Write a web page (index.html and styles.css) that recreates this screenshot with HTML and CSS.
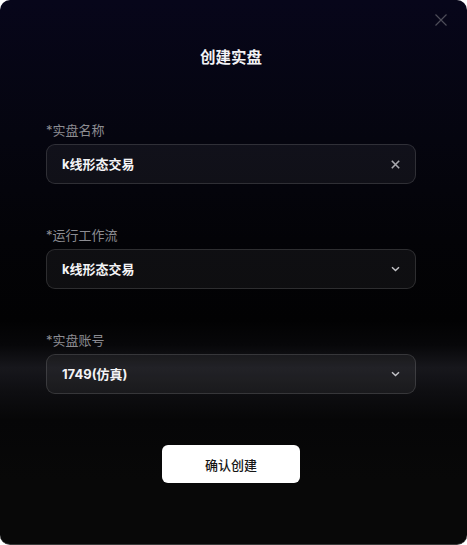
FILE: index.html
```html
<!DOCTYPE html>
<html lang="zh-CN">
<head>
<meta charset="utf-8">
<title>创建实盘</title>
<link rel="stylesheet" href="styles.css">
</head>
<body>
<div class="dialog">
  <button class="close" aria-label="关闭">
    <svg width="12" height="12" viewBox="0 0 12 12"><path d="M0.5 0.5L11.5 11.5M11.5 0.5L0.5 11.5" stroke="#4d4d58" stroke-width="1.2" fill="none"/></svg>
  </button>
  <h1 class="title">创建实盘</h1>
  <form class="form">
    <div class="field">
      <label class="label">*实盘名称</label>
      <div class="control">
        <span class="value">k线形态交易</span>
        <svg class="icon" width="9" height="9" viewBox="0 0 9 9"><path d="M0.8 0.8L8.2 8.2M8.2 0.8L0.8 8.2" stroke="#a8a8ae" stroke-width="1.6" fill="none"/></svg>
      </div>
    </div>
    <div class="field">
      <label class="label">*运行工作流</label>
      <div class="control">
        <span class="value">k线形态交易</span>
        <svg class="icon" width="9" height="6" viewBox="0 0 9 6"><path d="M1 1.2L4.5 4.6L8 1.2" stroke="#c4c4c8" stroke-width="1.4" fill="none"/></svg>
      </div>
    </div>
    <div class="field">
      <label class="label">*实盘账号</label>
      <div class="control">
        <span class="value">1749(仿真)</span>
        <svg class="icon" width="9" height="6" viewBox="0 0 9 6"><path d="M1 1.2L4.5 4.6L8 1.2" stroke="#c4c4c8" stroke-width="1.4" fill="none"/></svg>
      </div>
    </div>
    <div class="actions">
      <button type="button" class="primary">确认创建</button>
    </div>
  </form>
</div>
</body>
</html>
```
FILE: styles.css
```css
html, body {
  margin: 0;
  padding: 0;
  background: #ffffff;
}
body {
  font-family: Inter, "Noto Sans CJK SC", sans-serif;
}
.dialog {
  position: relative;
  box-sizing: border-box;
  width: 467px;
  height: 545px;
  border-radius: 10px;
  border-bottom: 1px solid #3a3a3a;
  padding: 46px 51px 0 46px;
  background: linear-gradient(180deg,
    #07061a 0px,
    #05050f 140px,
    #030307 240px,
    #020203 320px,
    #070709 345px,
    #17171c 368px,
    #0e0e11 392px,
    #060607 420px,
    #080808 480px,
    #080808 545px);
  overflow: hidden;
}
.close {
  position: absolute;
  top: 13px;
  left: 434px;
  width: 13px;
  height: 13px;
  padding: 0;
  border: 0;
  background: none;
  display: flex;
  align-items: center;
  justify-content: center;
}
.title {
  margin: 0;
  height: 24px;
  line-height: 24px;
  font-size: 15.5px;
  font-weight: 600;
  color: #f2f2f5;
  text-align: center;
}
.form {
  margin-top: 51px;
  display: flex;
  flex-direction: column;
  gap: 42px;
}
.field {
  display: flex;
  flex-direction: column;
  gap: 5px;
}
.label {
  height: 18px;
  line-height: 18px;
  font-size: 13px;
  color: #8c8c92;
}
.control {
  box-sizing: border-box;
  height: 40px;
  border: 1px solid rgba(255, 255, 255, 0.13);
  border-radius: 9px;
  background: rgba(255, 255, 255, 0.05);
  display: flex;
  align-items: center;
  justify-content: space-between;
  padding: 0 15px 0 15px;
}
.value {
  font-size: 13px;
  font-weight: 700;
  color: #f4f4f6;
  line-height: 18px;
}
.icon {
  display: block;
}
.actions {
  margin-top: 9px;
  display: flex;
  justify-content: center;
}
.primary {
  width: 138px;
  height: 38px;
  border: 0;
  border-radius: 6px;
  background: #ffffff;
  color: #161616;
  font-family: Inter, "Noto Sans CJK SC", sans-serif;
  font-size: 13px;
  font-weight: 500;
}
```
